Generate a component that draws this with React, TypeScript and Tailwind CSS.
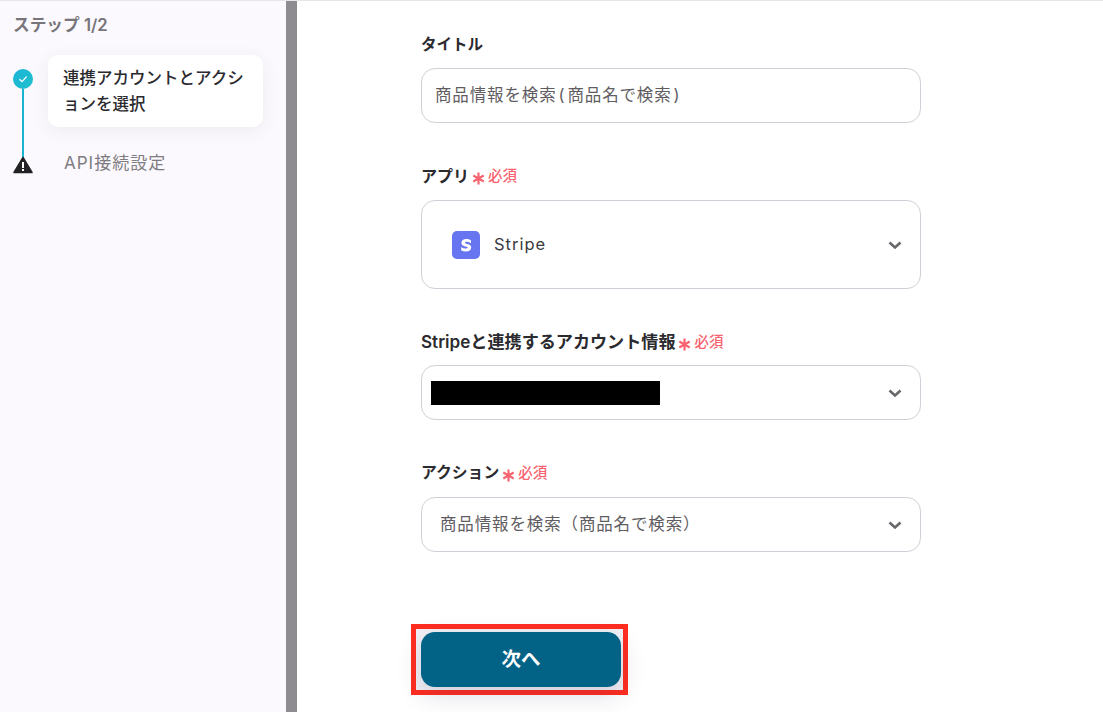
import React from "react";

const font = { fontFamily: '"Inter", "Noto Sans CJK JP", sans-serif' };

function Chevron() {
  return (
    <svg width="16" height="16" viewBox="0 0 16 16" fill="none" className="shrink-0">
      <path d="M2.5 5.5 L8 10.5 L13.5 5.5" stroke="#69676c" strokeWidth="2.6" strokeLinejoin="miter" />
    </svg>
  );
}

function Required() {
  return (
    <span className="flex items-center ml-[3px] text-[#f8636f] text-[14.5px] font-medium leading-none">
      <svg width="13" height="13" viewBox="0 0 12 12" className="mr-[3px] mt-[4px]" fill="none" stroke="#f8636f" strokeWidth="2">
        <path d="M6 0.5V11.5M1.2 3.2L10.8 8.8M10.8 3.2L1.2 8.8" />
      </svg>
      必須
    </span>
  );
}

function Label({ children, required }: { children: React.ReactNode; required?: boolean }) {
  return (
    <div className="flex items-center h-[20px] font-semibold text-[#2b2a2e] leading-none">
      {children}
      {required && <Required />}
    </div>
  );
}

export default function App() {
  return (
    <div style={font} className="h-[712px] w-[1103px] overflow-hidden bg-white border-t border-[#e6e6e8] flex">
      <aside className="w-[286px] shrink-0 bg-[#fbf9fd] pt-[14px] pl-[13px]">
        <div className="text-[16.7px] font-semibold text-[#77747a] leading-[20px]">ステップ 1/2</div>
        <div className="flex mt-[20px]">
          <div className="w-[20px] flex flex-col items-center pt-[14px] shrink-0">
            <div className="w-[20px] h-[20px] rounded-full bg-gradient-to-br from-[#1ab5d8] to-[#22c0cc] flex items-center justify-center">
              <svg width="10" height="10" viewBox="0 0 10 10" fill="none" stroke="#fff" strokeWidth="1.3">
                <path d="M1.5 5.2 L4 7.6 L8.6 2.6" />
              </svg>
            </div>
            <div className="w-[2px] h-[68px] bg-[#19b5d0]" />
            <svg width="20" height="18" viewBox="0 0 20 18" className="-mt-[1px]">
              <path d="M10 1.5 L19 16.5 H1 Z" fill="#222124" stroke="#222124" strokeWidth="1.5" strokeLinejoin="round" />
              <rect x="9" y="6" width="2" height="6" fill="#fff" />
              <rect x="9" y="13" width="2" height="2" fill="#fff" />
            </svg>
          </div>
          <div className="ml-[15px] flex flex-col">
            <div className="w-[215px] h-[72px] bg-white rounded-[10px] shadow-[0_4px_18px_rgba(60,50,90,0.07)] px-[15px] pt-[10px] text-[16.5px] font-medium leading-[26px] text-[#2b2a2e]">
              連携アカウントとアクションを選択
            </div>
            <div className="mt-[26px] pl-[16px] text-[17px] tracking-[1px] text-[#7f7c82] leading-[20px]">API接続設定</div>
          </div>
        </div>
      </aside>
      <div className="w-[11px] shrink-0 bg-[#8f8c91]" />
      <main className="flex-1 pl-[124px] pt-[34px]">
        <div className="w-[500px] flex flex-col">
          <Label><span className="text-[15.5px]">タイトル</span></Label>
          <div className="mt-[13px] h-[55px] rounded-[14px] border border-[#d0d0d8] flex items-center px-[13px] text-[16.5px] tracking-[0.86px] text-[#5f5d62]">
            商品情報を検索<span className="mx-[2px]">(</span>商品名で検索<span className="mx-[2px]">)</span>
          </div>
          <div className="mt-[43px]"><Label required><span className="text-[16px]">アプリ</span></Label></div>
          <div className="mt-[14px] h-[89px] rounded-[14px] border border-[#d0d0d8] flex items-center pl-[30px] pr-[17px] justify-between">
            <div className="flex items-center">
              <svg width="28" height="28" viewBox="0 0 28 28">
                <rect width="28" height="28" rx="5" fill="#6875f0" />
                <path d="M19 9.4 C17.6 8.5 16 8 14.3 8 C11.4 8 9.4 9.5 9.4 11.9 C9.4 16 15.6 14.8 15.6 16.5 C15.6 17.2 14.9 17.5 13.9 17.5 C12.4 17.5 10.6 16.9 9.2 15.9 V19.4 C10.8 20.1 12.4 20.4 13.9 20.4 C17 20.4 19.2 19 19.2 16.4 C19.2 12.2 13 13.4 13 11.7 C13 11.1 13.6 10.8 14.5 10.8 C16 10.8 17.7 11.4 19 12.2 Z" fill="#fff" />
              </svg>
              <span className="ml-[14px] text-[16.5px] tracking-[1px] text-[#3a3940]">Stripe</span>
            </div>
            <Chevron />
          </div>
          <div className="mt-[43px]"><Label required><span className="text-[17.1px]">Stripeと連携するアカウント情報</span></Label></div>
          <div className="mt-[13px] h-[55px] rounded-[14px] border border-[#d0d0d8] flex items-center justify-between pl-[9px] pr-[17px]">
            <div className="w-[229px] h-[24px] bg-black" />
            <Chevron />
          </div>
          <div className="mt-[43px]"><Label required><span className="text-[15.8px]">アクション</span></Label></div>
          <div className="mt-[14px] h-[55px] rounded-[14px] border border-[#d0d0d8] flex items-center justify-between pl-[18px] pr-[17px] text-[16.5px] tracking-[0.86px] text-[#5f5d62]">
            商品情報を検索（商品名で検索）
            <Chevron />
          </div>
          <div className="mt-[72px] -ml-[10px] w-[217px] h-[71px] border-[5px] border-[#ff2d20] bg-[#f1f0f5] flex items-center justify-start pl-[5px]">
            <button className="w-[200px] h-[55px] rounded-[14px] bg-[#026387] text-white text-[19.5px] font-bold shadow-[0_8px_24px_rgba(60,50,90,0.18)]">
              次へ
            </button>
          </div>
        </div>
      </main>
    </div>
  );
}
